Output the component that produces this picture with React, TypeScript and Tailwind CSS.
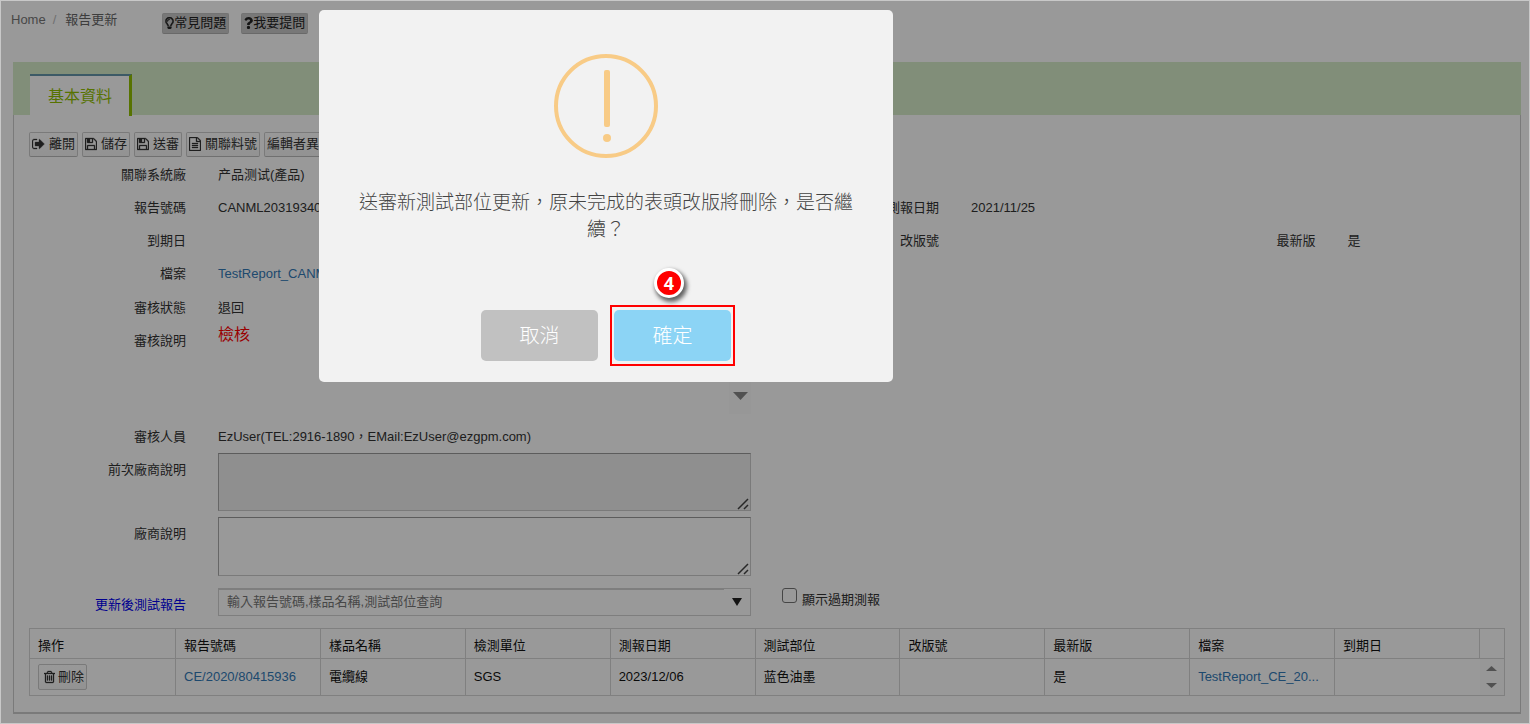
import type { ReactNode } from "react";
import { FaQuestion, FaRegLightbulb } from "react-icons/fa";

const ICONS = {
  signOut: {
    box: "0 0 1664 1792",
    d: "M640 1440q0 4 1 20t.5 26.5-3 23.5-10 19.5-20.5 6.5h-320q-119 0-203.5-84.5t-84.5-203.5v-704q0-119 84.5-203.5t203.5-84.5h320q13 0 22.5 9.5t9.5 22.5q0 4 1 20t.5 26.5-3 23.5-10 19.5-20.5 6.5h-320q-66 0-113 47t-47 113v704q0 66 47 113t113 47h312l11.5 1 11.5 3 8 5.5 7 9 2 13.5zm928-544q0 26-19 45l-544 544q-19 19-45 19t-45-19-19-45v-288h-448q-26 0-45-19t-19-45v-384q0-26 19-45t45-19h448v-288q0-26 19-45t45-19 45 19l544 544q19 19 19 45z",
  },
  save: {
    box: "0 0 1536 1792",
    d: "M384 1536h768v-384h-768v384zm896 0h128v-896q0-14-10-38.5t-20-34.5l-281-281q-10-10-34-20t-39-10v416q0 40-28 68t-68 28h-576q-40 0-68-28t-28-68v-416h-128v1280h128v-416q0-40 28-68t68-28h832q40 0 68 28t28 68v416zm-384-928v-320q0-13-9.5-22.5t-22.5-9.5h-192q-13 0-22.5 9.5t-9.5 22.5v320q0 13 9.5 22.5t22.5 9.5h192q13 0 22.5-9.5t9.5-22.5zm640 32v928q0 40-28 68t-68 28h-1344q-40 0-68-28t-28-68v-1344q0-40 28-68t68-28h928q40 0 88 20t76 48l280 280q28 28 48 76t20 88z",
  },
  file: {
    box: "0 0 1536 1792",
    d: "M1468 380q28 28 48 76t20 88v1152q0 40-28 68t-68 28h-1344q-40 0-68-28t-28-68v-1600q0-40 28-68t68-28h896q40 0 88 20t76 48zm-444-244v376h376q-10-29-22-41l-313-313q-12-12-41-22zm384 1528v-1024h-416q-40 0-68-28t-28-68v-416h-768v1536h1280zm-1024-864q0-14 9-23t23-9h704q14 0 23 9t9 23v64q0 14-9 23t-23 9h-704q-14 0-23-9t-9-23v-64zm736 224q14 0 23 9t9 23v64q0 14-9 23t-23 9h-704q-14 0-23-9t-9-23v-64q0-14 9-23t23-9h704zm0 256q14 0 23 9t9 23v64q0 14-9 23t-23 9h-704q-14 0-23-9t-9-23v-64q0-14 9-23t23-9h704z",
  },
  trash: {
    box: "0 0 1408 1792",
    d: "M512 736v576q0 14-9 23t-23 9h-64q-14 0-23-9t-9-23v-576q0-14 9-23t23-9h64q14 0 23 9t9 23zm256 0v576q0 14-9 23t-23 9h-64q-14 0-23-9t-9-23v-576q0-14 9-23t23-9h64q14 0 23 9t9 23zm256 0v576q0 14-9 23t-23 9h-64q-14 0-23-9t-9-23v-576q0-14 9-23t23-9h64q14 0 23 9t9 23zm128 724v-948h-896v948q0 22 7 40.5t14.5 27 10.5 8.5h832q3 0 10.5-8.5t14.5-27 7-40.5zm-672-1076h448l-48-117q-7-9-17-11h-317q-10 2-17 11zm928 32v64q0 14-9 23t-23 9h-96v948q0 83-47 143.5t-113 60.5h-832q-66 0-113-58.5t-47-141.5v-952h-96q-14 0-23-9t-9-23v-64q0-14 9-23t23-9h309l70-167q15-37 54-63t79-26h320q40 0 79 26t54 63l70 167h309q14 0 23 9t9 23z",
  },
};

function Icon({ name }: { name: keyof typeof ICONS }) {
  return (
    <svg
      viewBox={ICONS[name].box}
      className="h-[14px] w-auto"
      fill="currentColor"
      stroke="currentColor"
      strokeWidth="40"
      aria-hidden="true"
    >
      <path d={ICONS[name].d} />
    </svg>
  );
}

function ToolButton({ icon, children }: { icon?: keyof typeof ICONS; children: ReactNode }) {
  return (
    <button
      type="button"
      className="flex h-[25px] shrink-0 items-center gap-1 rounded-xs border border-[#ccc] border-b-[#bbb] bg-linear-to-b from-white to-[#f4f4f4] px-[2px] pb-[2px] whitespace-nowrap"
    >
      {icon && <Icon name={icon} />}
      {children}
    </button>
  );
}

function Field({
  label,
  htmlFor,
  blue,
  className = "",
  children,
}: {
  label: string;
  htmlFor?: string;
  blue?: boolean;
  className?: string;
  children?: ReactNode;
}) {
  const tone = blue ? "text-[#0000ee]" : "";
  const box = "w-[172px] shrink-0 text-right leading-[33px] whitespace-nowrap";
  return (
    <div className={`flex gap-8 ${className}`}>
      {htmlFor ? (
        <label htmlFor={htmlFor} className={`${box} ${tone}`}>
          {label}
        </label>
      ) : (
        <span className={`${box} ${tone}`}>{label}</span>
      )}
      <div className="min-w-0 flex-1 leading-[33px]">{children}</div>
    </div>
  );
}

function NoteArea({ id, disabled }: { id: string; disabled?: boolean }) {
  return (
    <div className="relative mr-4">
      <textarea
        id={id}
        disabled={disabled}
        className="block h-[59px] w-full resize-none border border-[#ccc] border-t-[#999] border-l-[#aaa] bg-white p-1 disabled:h-[58px] disabled:bg-[#eee]"
      />
      <svg viewBox="0 0 12 12" className="absolute right-[2px] bottom-[1px] size-3" stroke="#444" strokeWidth="1.5" aria-hidden="true">
        <path d="M1 11L11 1M7 11L11 7" />
      </svg>
    </div>
  );
}

function Arrow({ up, className }: { up?: boolean; className: string }) {
  return (
    <svg viewBox="0 0 14 8" className={className} fill="currentColor" preserveAspectRatio="none" aria-hidden="true">
      <path d={up ? "M0 8L7 0L14 8Z" : "M0 0H14L7 8Z"} />
    </svg>
  );
}

const HEADERS = ["操作", "報告號碼", "樣品名稱", "檢測單位", "測報日期", "測試部位", "改版號", "最新版", "檔案", "到期日"];
const CELLS = ["電纜線", "SGS", "2023/12/06", "蓝色油墨", "", "是"];

function ReportTable() {
  const cell = "border border-[#d6d6d6] px-2";
  return (
    <table className="w-full table-fixed border-collapse text-left text-[#111]">
      <colgroup>
        {HEADERS.map((h, i) => (
          <col key={h} className={i === 0 ? "w-[146px]" : undefined} />
        ))}
        <col className="w-[25px]" />
      </colgroup>
      <thead>
        <tr className="h-[30px]">
          {HEADERS.map((h) => (
            <th key={h} className={`${cell} pt-1 font-normal`}>
              {h}
            </th>
          ))}
          <th className={cell} aria-label="捲動" />
        </tr>
      </thead>
      <tbody>
        <tr className="h-[37px]">
          <td className={cell}>
            <button
              type="button"
              className="flex h-[26px] items-center gap-[3px] rounded-xs border border-[#ccc] bg-linear-to-b from-white to-[#f4f4f4] pr-[2px] pl-[5px] text-[#333]"
            >
              <Icon name="trash" />
              刪除
            </button>
          </td>
          <td className={cell}>
            <a href="#report" className="text-[#337ab7]">
              CE/2020/80415936
            </a>
          </td>
          {CELLS.map((c, i) => (
            <td key={i} className={cell}>
              {c}
            </td>
          ))}
          <td className={`${cell} whitespace-nowrap text-[#337ab7]`}>
            <a href="#file">TestReport_CE_20...</a>
          </td>
          <td className="border border-r-0 border-[#d6d6d6]" />
          <td className="border border-l-0 border-[#d6d6d6] bg-[#fcfcfc]">
            <div className="flex flex-col items-center gap-3 text-[#888]">
              <Arrow up className="h-[5px] w-[11px]" />
              <Arrow className="h-[5px] w-[11px]" />
            </div>
          </td>
        </tr>
      </tbody>
    </table>
  );
}

function ConfirmDialog() {
  const button = "h-[51px] w-[117px] rounded-[5px] text-xl font-light text-white";
  return (
    <div className="fixed inset-px bg-black/40">
      <div
        role="dialog"
        aria-modal="true"
        aria-describedby="confirm-text"
        className="absolute top-[9px] left-[318px] flex w-[574px] flex-col items-center rounded-[5px] bg-[#f2f2f2] px-9 pt-11 pb-[21px]"
      >
        <svg viewBox="0 0 104 104" className="size-[104px]" aria-hidden="true">
          <circle cx="52" cy="52" r="50" fill="none" stroke="#f8cb86" strokeWidth="4" />
          <rect x="50" y="16" width="6" height="57" rx="2" fill="#f8cb86" />
          <circle cx="53" cy="84" r="4" fill="#f8cb86" />
        </svg>
        <p id="confirm-text" className="mt-[31px] text-center text-[19px] leading-[27px] font-light text-[#444]">
          送審新測試部位更新，原未完成的表頭改版將刪除，是否繼續？
        </p>
        <div className="mt-[67px] flex gap-4">
          <button type="button" className={`${button} bg-[#c1c1c1]`}>
            取消
          </button>
          <div className="relative">
            <button type="button" className={`${button} bg-[#8cd4f5]`}>
              確定
            </button>
            <span className="pointer-events-none absolute -inset-x-1 -inset-y-[5px] border-2 border-[#f00]" />
            <span className="absolute -top-[42px] left-10 flex size-[30px] items-center justify-center rounded-full border-3 border-white bg-[#f00] font-['Noto_Sans'] text-lg leading-none font-bold text-white shadow-[2px_3px_4px_1px_rgba(0,0,0,0.6)]">
              4
            </span>
          </div>
        </div>
      </div>
    </div>
  );
}

export default function App() {
  const helpButton =
    "flex h-[21px] items-center rounded-xs border border-[#c0c0c0] border-b-[#b0b0b0] bg-[#c8c8c8] px-[2px] pb-[2px] text-[#222]";
  return (
    <div className="min-h-screen border border-[#c8c8c8] bg-white pb-[9px] font-['Liberation_Sans','Noto_Sans_CJK_TC',sans-serif] text-[13px] leading-5 text-[#333]">
      <header className="flex h-[61px] items-start pt-[9px] pl-[10px]">
        <nav className="flex items-center text-[#666]">
          <a href="#home" className="text-[#777]">
            Home
          </a>
          <span className="pr-[9px] pl-[7px] text-[#bbb]">/</span>
          <span>報告更新</span>
        </nav>
        <div className="mt-[3px] ml-[45px] flex gap-3">
          <button type="button" className={helpButton}>
            <FaRegLightbulb className="h-[12px] w-[9px]" stroke="currentColor" strokeWidth="20" />
            常見問題
          </button>
          <button type="button" className={helpButton}>
            <FaQuestion className="h-[12px] w-[9px]" />
            我要提問
          </button>
        </div>
      </header>

      <main className="mr-2 ml-3">
        <div className="flex h-[53px] items-end bg-[#d7edca] pl-[17px]">
          <button
            type="button"
            className="-mb-px h-[42px] border-t-2 border-r-3 border-t-[#6496aa] border-r-[#92c000] bg-white pt-[2px] pr-[17px] pl-[18px] text-base text-[#92c000]"
          >
            基本資料
          </button>
        </div>

        <section className="border border-t-0 border-b-2 border-[#ccc] pt-[17px] pb-4">
          <div className="flex gap-1 overflow-hidden px-[15px]">
            <ToolButton icon="signOut">離開</ToolButton>
            <ToolButton icon="save">儲存</ToolButton>
            <ToolButton icon="save">送審</ToolButton>
            <ToolButton icon="file">關聯料號</ToolButton>
            <ToolButton>編輯者異動</ToolButton>
          </div>

          <form className="mt-px grid grid-cols-4">
            <Field label="關聯系統廠" className="col-span-4">
              产品测试(產品)
            </Field>
            <Field label="報告號碼" className="col-span-2">
              CANML20319340
            </Field>
            <Field label="測報日期" className="col-span-2">
              2021/11/25
            </Field>
            <Field label="到期日" className="col-span-2" />
            <Field label="改版號" />
            <Field label="最新版">是</Field>
            <Field label="檔案" className="col-span-4 pb-px">
              <a href="#attachment" className="text-[#337ab7]">
                TestReport_CANML20319340
              </a>
            </Field>
            <Field label="審核狀態" className="col-span-4">
              退回
            </Field>
            <Field label="審核說明" className="col-span-2">
              <div className="mr-4 mb-[6px] flex h-[90px] justify-between">
                <span className="text-base leading-[22px] text-[#f00]">檢核</span>
                <div className="flex w-[22px] flex-col items-center justify-end bg-[#fcfcfc] pb-[14px] text-[#888]">
                  <Arrow className="h-2 w-[15px]" />
                </div>
              </div>
            </Field>
            <Field label="審核人員" className="col-span-4">
              EzUser(TEL:2916-1890，EMail:EzUser@ezgpm.com)
            </Field>
            <Field label="前次廠商說明" htmlFor="previous-note" className="col-span-2 col-start-1 pb-[6px]">
              <NoteArea id="previous-note" disabled />
            </Field>
            <Field label="廠商說明" htmlFor="vendor-note" className="col-span-2 col-start-1 pb-3">
              <NoteArea id="vendor-note" />
            </Field>
            <Field label="更新後測試報告" htmlFor="new-report" blue className="col-span-2 col-start-1">
              <div className="mr-4 flex h-[28px] border border-[#d2d2d2]">
                <input
                  id="new-report"
                  type="text"
                  placeholder="輸入報告號碼,樣品名稱,測試部位查詢"
                  className="min-w-0 flex-1 border-t border-[#d2d2d2] px-2 pb-[2px] placeholder:text-[#777]"
                />
                <button type="button" aria-label="展開" className="flex w-[26px] items-center justify-center text-[#222]">
                  <Arrow className="h-[8px] w-[10px]" />
                </button>
              </div>
            </Field>
            <label className="col-span-2 flex h-10 items-start pl-[15px]">
              <input type="checkbox" className="mr-[5px] size-[15px] appearance-none rounded-[3px] border border-[#767676] bg-white" />
              <span className="leading-6">顯示過期測報</span>
            </label>
          </form>

          <div className="px-[15px]">
            <ReportTable />
          </div>
        </section>
      </main>

      <ConfirmDialog />
    </div>
  );
}
